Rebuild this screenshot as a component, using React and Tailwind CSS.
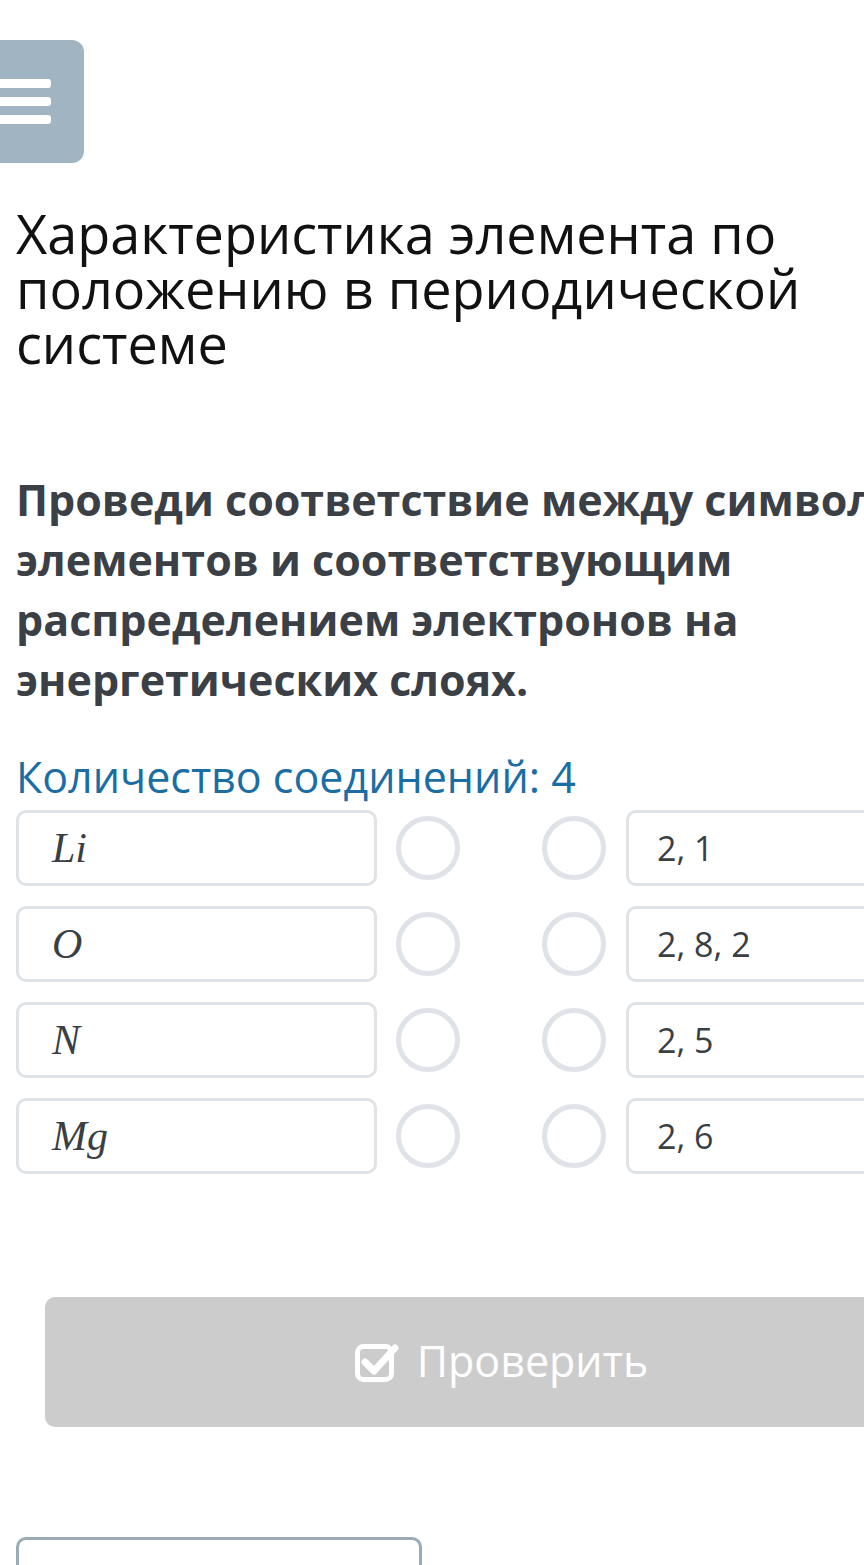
import React from "react";

const rows = [
  { l: "Li", r: "2, 1" },
  { l: "O", r: "2, 8, 2" },
  { l: "N", r: "2, 5" },
  { l: "Mg", r: "2, 6" },
];

export default function App() {
  return (
    <div className="w-[864px] h-[1565px] overflow-hidden bg-white" style={{ fontFamily: '"Open Sans", "Noto Sans", sans-serif' }}>
      <div className="w-[1003px] px-[16px]">
        <div className="-ml-[56px] mt-[40px] w-[124px] h-[123px] rounded-[12px] bg-[#a0b4c2] flex flex-col justify-center items-start gap-[9px] pl-[2px]">
          <div className="w-[89px] h-[9px] rounded-[3px] bg-white" />
          <div className="w-[89px] h-[9px] rounded-[3px] bg-white" />
          <div className="w-[89px] h-[9px] rounded-[3px] bg-white" />
        </div>

        <h1 className="mt-[43px] text-[54px] leading-[55px] text-[#111111] font-normal w-[820px]">
          Характеристика элемента по положению в периодической системе
        </h1>

        <p className="mt-[99px] text-[43px] leading-[60px] font-bold text-[#3b4046] whitespace-nowrap">
          Проведи соответствие между символами<br />элементов и соответствующим<br />распределением электронов на<br />энергетических слоях.
        </p>

        <div className="mt-[40px] text-[43px] leading-[54px] text-[#1b6ea3]">Количество соединений: 4</div>

        <div className="mt-[6px] flex flex-col gap-[20px]">
          {rows.map((row) => (
            <div key={row.l} className="flex items-center h-[76px]">
              <div className="w-[361px] h-[76px] rounded-[10px] border-[3px] border-[#dfe3e6] flex items-center pl-[33px]">
                <span className="text-[42px] italic text-[#3a3f44]" style={{ fontFamily: '"Liberation Serif", serif' }}>{row.l}</span>
              </div>
              <div className="ml-[19px] w-[64px] h-[64px] rounded-full border-[5px] border-[#dfe2e7]" />
              <div className="ml-[82px] w-[64px] h-[64px] rounded-full border-[5px] border-[#dfe2e7]" />
              <div className="ml-[20px] w-[361px] h-[76px] rounded-[10px] border-[3px] border-[#dfe3e6] flex items-center pl-[28px]">
                <span className="text-[34px] text-[#3a3f44]">{row.r}</span>
              </div>
            </div>
          ))}
        </div>

        <div className="mt-[123px] ml-[29px] w-[913px] h-[130px] rounded-[10px] bg-[#cccccc] flex items-center justify-center gap-[18px]">
          <svg width="44" height="40" viewBox="0 0 44 40" fill="none">
            <rect x="2.5" y="4.5" width="34" height="33" rx="6" stroke="white" strokeWidth="5" />
            <path d="M10 20 L19 29 L40 6" stroke="white" strokeWidth="7" strokeLinecap="round" strokeLinejoin="round" />
          </svg>
          <span className="text-[43px] text-white leading-none pb-[4px]">Проверить</span>
        </div>

        <div className="mt-[110px] w-[406px] h-[100px] rounded-[10px] border-[3px] border-[#9aabb8]" />
      </div>
    </div>
  );
}
